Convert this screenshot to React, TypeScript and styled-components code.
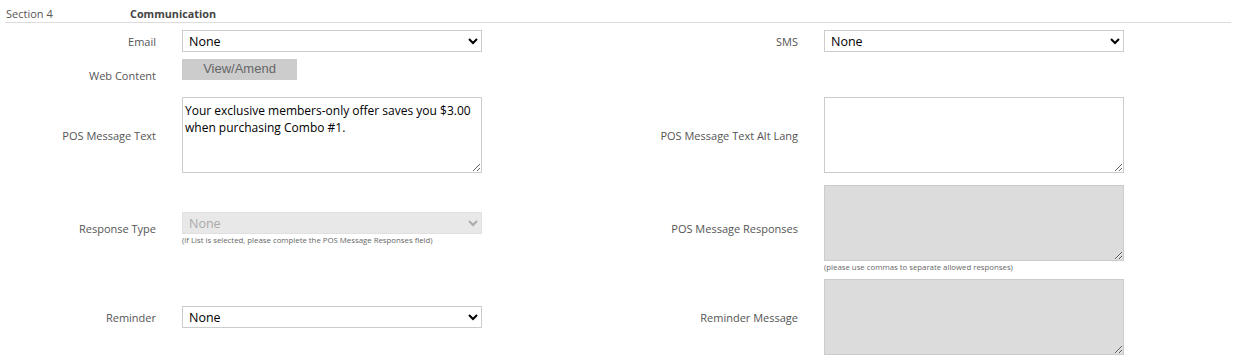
import React from "react";
import styled, { createGlobalStyle } from "styled-components";

const Global = createGlobalStyle`
  html, body { margin: 0; padding: 0; background: #fff; }
  body { font-family: "Open Sans", "Noto Sans", sans-serif; }
`;

const Page = styled.div`
  width: 1239px;
  padding: 0 8px 0 5px;
  box-sizing: border-box;
`;

const Header = styled.div`
  display: flex;
  align-items: center;
  height: 22px;
  border-bottom: 1px solid #dcdcdc;
  width: 1226px;
  font-size: 11px;
  color: #555;
`;

const SectionNo = styled.span`
  width: 124px;
  padding-left: 1px;
  padding-top: 5px;
`;

const SectionTitle = styled.span`
  font-weight: 700;
  font-size: 10.8px;
  color: #444;
  padding-top: 5px;
`;

const Row = styled.div<{ $top: number; $h: number }>`
  display: grid;
  grid-template-columns: 151px 300px 290px 300px;
  column-gap: 26px;
  align-items: center;
  margin-top: ${(p) => p.$top}px;
  min-height: ${(p) => p.$h}px;
`;

const Label = styled.div`
  text-align: right;
  font-size: 11px;
  color: #555;
`;

const Field = styled.div<{ $align?: string }>`
  display: flex;
  flex-direction: column;
  align-items: flex-start;
  align-self: ${(p) => p.$align || "center"};
`;

const Select = styled.select`
  width: 300px;
  height: 22px;
  box-sizing: border-box;
  border: 1px solid #ccc;
  border-radius: 0;
  background: #fff;
  font-family: "Open Sans", sans-serif;
  font-size: 12.5px;
  color: #000;
  padding: 0 2px;
  margin: 0;
  &:disabled {
    background: #e8e8e8;
    color: #aaa;
    border-color: #e0e0e0;
    opacity: 1;
  }
`;

const TextArea = styled.textarea<{ $disabled?: boolean }>`
  width: 300px;
  height: 76px;
  box-sizing: border-box;
  border: 1px solid #ccc;
  border-radius: 0;
  background: ${(p) => (p.$disabled ? "#dcdcdc" : "#fff")};
  font-family: "Open Sans", sans-serif;
  font-size: 12px;
  line-height: 17px;
  color: #000;
  padding: 4px 2px 2px;
  margin: 0;
  resize: both;
  display: block;
`;

const Button = styled.button`
  display: block;
  width: 115px;
  height: 21px;
  border: none;
  background: #cccccc;
  color: #666;
  font-family: "Liberation Sans", Arial, sans-serif;
  font-size: 13px;
  line-height: 19px;
  padding: 0 0 2px;
  margin: 0;
  cursor: pointer;
`;

const Hint = styled.div`
  font-size: 7.8px;
  color: #666;
  margin-top: 2px;
  line-height: 9px;
  white-space: nowrap;
`;

export default function App() {
  return (
    <Page>
      <Global />
      <Header>
        <SectionNo>Section 4</SectionNo>
        <SectionTitle>Communication</SectionTitle>
      </Header>
      <Row $top={7} $h={22}>
        <Label>Email</Label>
        <Field>
          <Select defaultValue="None">
            <option>None</option>
          </Select>
        </Field>
        <Label>SMS</Label>
        <Field>
          <Select defaultValue="None">
            <option>None</option>
          </Select>
        </Field>
      </Row>
      <Row $top={7} $h={32}>
        <Label>Web Content</Label>
        <Field $align="start">
          <Button>View/Amend</Button>
        </Field>
        <div />
        <div />
      </Row>
      <Row $top={6} $h={76}>
        <Label>POS Message Text</Label>
        <Field>
          <TextArea
            defaultValue={"Your exclusive members-only offer saves you $3.00 when purchasing Combo #1."}
          />
        </Field>
        <Label>POS Message Text Alt Lang</Label>
        <Field>
          <TextArea defaultValue="" />
        </Field>
      </Row>
      <Row $top={12} $h={87}>
        <Label>Response Type</Label>
        <Field>
          <Select disabled defaultValue="None">
            <option>None</option>
          </Select>
          <Hint>(if List is selected, please complete the POS Message Responses field)</Hint>
        </Field>
        <Label>POS Message Responses</Label>
        <Field>
          <TextArea $disabled disabled defaultValue="" />
          <Hint>(please use commas to separate allowed responses)</Hint>
        </Field>
      </Row>
      <Row $top={7} $h={76}>
        <Label>Reminder</Label>
        <Field>
          <Select defaultValue="None">
            <option>None</option>
          </Select>
        </Field>
        <Label>Reminder Message</Label>
        <Field>
          <TextArea $disabled disabled defaultValue="" />
        </Field>
      </Row>
    </Page>
  );
}
